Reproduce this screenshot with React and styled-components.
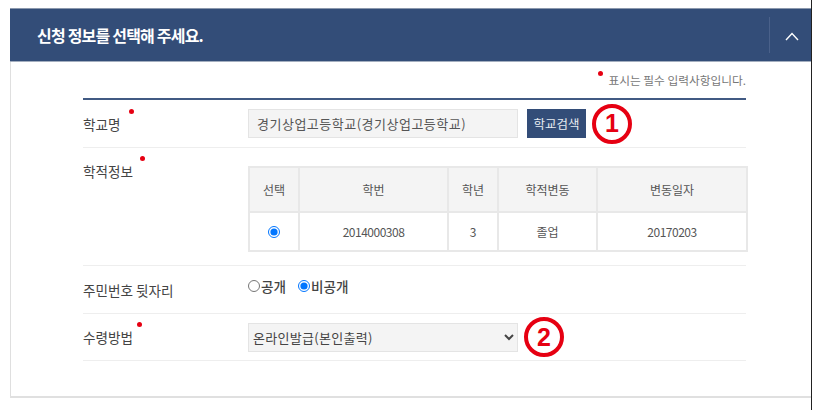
import React from "react";
import styled, { createGlobalStyle } from "styled-components";

const Global = createGlobalStyle`
  html, body { margin: 0; padding: 0; background: #fff; }
  body { font-family: "Noto Sans CJK KR", "Noto Sans", sans-serif; color: #444; overflow: hidden; }
  * { box-sizing: border-box; }
`;

const Page = styled.div`
  width: 812px;
  height: 410px;
  padding: 8px 0 0 10px;
  border-right: 1px solid #222;
`;
const Panel = styled.section`
  height: 390px;
  border-left: 1px solid #dfdfdf;
  border-bottom: 2px solid #e0e0e0;
`;
const Header = styled.header`
  height: 54px;
  background: #334d78;
  border-top: 1px solid #8b98ad;
  border-bottom: 1px solid #a3aebf;
  margin-left: -1px;
  display: flex;
  align-items: center;
  justify-content: space-between;
`;
const Title = styled.h2`
  margin: 0 0 0 27px;
  color: #fff;
  font-size: 16px;
  font-weight: 700;
  letter-spacing: -0.8px;
`;
const Toggle = styled.div`
  width: 42px;
  height: 36px;
  padding: 2px 0 0 2px;
  border-left: 1px solid #4a618a;
  display: flex;
  align-items: center;
  justify-content: center;
`;
const Content = styled.div`
  padding: 0 65px 0 72px;
`;
const Note = styled.p`
  margin: 0;
  height: 36px;
  padding-top: 10px;
  text-align: right;
  font-size: 11.7px;
  line-height: 16px;
  color: #777;
`;
const NoteText = styled.span`
  position: relative;
  &::before {
    content: "";
    position: absolute;
    top: 0;
    left: -10px;
    width: 5px;
    height: 5px;
    border-radius: 50%;
    background: #e60012;
  }
`;
const Form = styled.div`
  border-top: 2px solid #415a83;
`;
const Row = styled.div`
  display: grid;
  grid-template-columns: 165px 1fr;
  align-items: ${({ $top }) => ($top ? "start" : "center")};
  height: ${({ $h }) => $h}px;
  border-bottom: 1px solid #eee;
  padding-top: ${({ $top }) => ($top ? "18px" : "0")};
`;
const Label = styled.span`
  justify-self: start;
  position: relative;
  font-size: 13.6px;
  line-height: 18px;
  color: #444;
  ${({ $top }) => $top && "margin-top: -4px;"}
  ${({ $req }) =>
    $req != null &&
    `&::after {
      content: "";
      position: absolute;
      top: -6px;
      right: -${$req}px;
      width: 5px;
      height: 5px;
      border-radius: 50%;
      background: #e60012;
    }`}
`;
const Field = styled.div`
  display: flex;
  align-items: center;
`;
const SchoolInput = styled.input`
  width: 270px;
  height: 29px;
  padding: 0 8px;
  background: #f4f4f4;
  border: 1px solid #e4e4e4;
  font: 13px "Noto Sans CJK KR", sans-serif;
  letter-spacing: 0.5px;
  color: #555;
`;
const SearchButton = styled.button`
  width: 59px;
  height: 29px;
  margin-left: 9px;
  padding: 0;
  border: 0;
  background: #334d78;
  color: #e8ecf2;
  font: 12.5px "Noto Sans CJK KR", sans-serif;
`;
const Badge = styled.span`
  width: 40px;
  height: 40px;
  margin: -6px 0 -6px 6px;
  border: 4px solid #e60012;
  border-radius: 50%;
  color: #e60012;
  font: 700 25px/1 "Liberation Sans", sans-serif;
  display: flex;
  align-items: center;
  justify-content: center;
`;
const Table = styled.table`
  width: 498px;
  border-collapse: collapse;
  table-layout: fixed;
  font-size: 12px;
  color: #555;
  th, td {
    border: 2px solid #e8e8e8;
    text-align: center;
    padding: 0;
  }
  th {
    height: 45px;
    background: #f4f4f4;
    font-weight: 400;
  }
  td { height: 39px; }
`;
const Numeric = styled.span`
  letter-spacing: -0.5px;
`;
const Radios = styled.div`
  display: flex;
  align-items: center;
  margin-top: -8px;
  font-size: 13.6px;
  font-weight: 500;
  color: #444;
`;
const RadioLabel = styled.label`
  display: flex;
  align-items: center;
  margin-right: 12px;
`;
const Radio = styled.input.attrs({ type: "radio" })`
  width: 12px;
  height: 12px;
  margin: 1px 1px 0 0;
`;
const TableRadio = styled(Radio)`
  margin: 3px 0 0;
`;
const MethodSelect = styled.select`
  width: 270px;
  height: 29px;
  padding: 0;
  background: #f4f4f4;
  border: 1px solid #e4e4e4;
  font: 13px "Noto Sans CJK KR", sans-serif;
  letter-spacing: 0.3px;
  color: #444;
`;

const columns = [
  ["선택", 50],
  ["학번", 149],
  ["학년", 50],
  ["학적변동", 99],
  ["변동일자", 150],
];

export default function App() {
  return (
    <Page>
      <Global />
      <Panel>
        <Header>
          <Title>신청 정보를 선택해 주세요.</Title>
          <Toggle>
            <svg width="14" height="9" viewBox="0 0 14 9" fill="none">
              <path d="M1 8L7 1.5L13 8" stroke="#fff" strokeWidth="1.4" />
            </svg>
          </Toggle>
        </Header>
        <Content>
          <Note>
            <NoteText>표시는 필수 입력사항입니다.</NoteText>
          </Note>
          <Form>
            <Row $h={48}>
              <Label $req={13}>학교명</Label>
              <Field>
                <SchoolInput readOnly value="경기상업고등학교(경기상업고등학교)" />
                <SearchButton>학교검색</SearchButton>
                <Badge>1</Badge>
              </Field>
            </Row>
            <Row $h={118} $top>
              <Label $req={12} $top>학적정보</Label>
              <Table>
                <colgroup>
                  {columns.map(([name, width]) => (
                    <col key={name} width={width} />
                  ))}
                </colgroup>
                <thead>
                  <tr>
                    {columns.map(([name]) => (
                      <th key={name}>{name}</th>
                    ))}
                  </tr>
                </thead>
                <tbody>
                  <tr>
                    <td><TableRadio name="record" defaultChecked /></td>
                    <td><Numeric>2014000308</Numeric></td>
                    <td>3</td>
                    <td>졸업</td>
                    <td><Numeric>20170203</Numeric></td>
                  </tr>
                </tbody>
              </Table>
            </Row>
            <Row $h={48}>
              <Label>주민번호 뒷자리</Label>
              <Radios>
                <RadioLabel><Radio name="rrn" />공개</RadioLabel>
                <RadioLabel><Radio name="rrn" defaultChecked />비공개</RadioLabel>
              </Radios>
            </Row>
            <Row $h={47}>
              <Label $req={9}>수령방법</Label>
              <Field>
                <MethodSelect defaultValue="online">
                  <option value="online">온라인발급(본인출력)</option>
                </MethodSelect>
                <Badge>2</Badge>
              </Field>
            </Row>
          </Form>
        </Content>
      </Panel>
    </Page>
  );
}
